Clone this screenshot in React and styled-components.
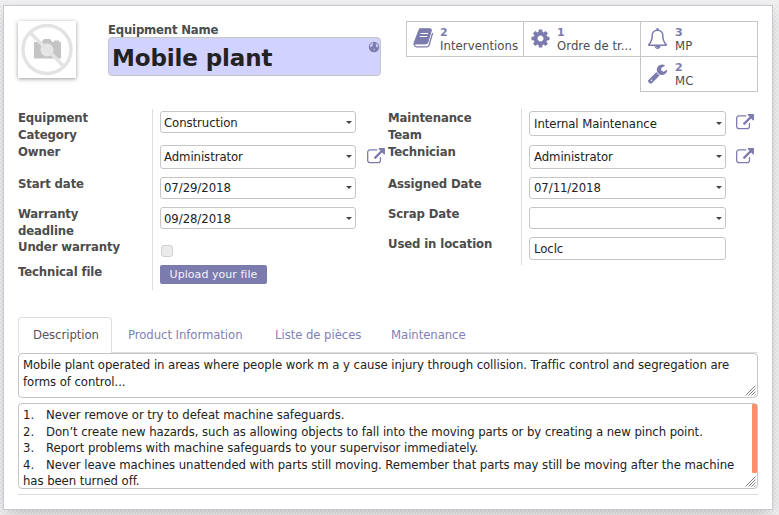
import React from 'react';
import styled, { createGlobalStyle } from 'styled-components';

const purple = '#7c7bad';
const edge = '#c6c6c6';

const GlobalStyle = createGlobalStyle`
  * { box-sizing: border-box; }
  html, body { margin: 0; padding: 0; }
  body {
    background-color: #ececec;
    background-image: repeating-conic-gradient(#e6e6e6 0 25%, #f1f1f1 0 50%);
    background-size: 4px 4px;
    font-family: "DejaVu Sans Condensed", "DejaVu Sans", sans-serif;
    font-size: 13px;
    letter-spacing: -0.065px;
    line-height: 17px;
    color: #222;
    overflow: hidden;
  }
`;

const Page = styled.div`
  height: 515px;
  padding: 5px 6px 5px 3px;
  background: linear-gradient(#f0f0f0, #ededed) top / 100% 5px no-repeat;
`;

const Sheet = styled.main`
  height: 505px;
  padding: 15px 14px 0;
  background: #fff;
  border: 1px solid #c8c8d3;
  box-shadow: 0 5px 14px -5px rgba(0, 0, 0, 0.28);
`;

const Header = styled.header`
  display: flex;
  align-items: flex-start;
  height: 88px;
`;

const Photo = styled.div`
  width: 58px;
  height: 57px;
  background: #fff;
  box-shadow: 0 1px 4px rgba(0, 0, 0, 0.4);
  svg { display: block; }
`;

const TitleBlock = styled.div`
  width: 273px;
  margin-left: 32px;
`;

const TitleLabel = styled.label`
  display: block;
  height: 16px;
  font-weight: bold;
  letter-spacing: -0.2px;
  color: #4c4c4c;
`;

const TitleInput = styled.div`
  display: flex;
  justify-content: space-between;
  height: 39px;
  padding: 3px 0 0 3px;
  border: 1px solid ${edge};
  border-radius: 4px;
  background: #d2d2ff;
  font: bold 23px/34px "DejaVu Sans", sans-serif;
  letter-spacing: -0.12px;
`;

const StatGrid = styled.div`
  display: grid;
  direction: rtl;
  grid-template-columns: 118px 117px 117px;
  margin-left: 25px;
`;

const StatButton = styled.button`
  display: flex;
  direction: ltr;
  height: 36px;
  margin: 0 ${p => (p.$edge ? 0 : -1)}px -1px 0;
  padding: 4px 0 0 6px;
  gap: ${p => (p.$edge ? 7 : 6)}px;
  border: 1px solid ${edge};
  background: #fff;
  font: inherit;
  letter-spacing: 0.05px;
  text-align: left;
  color: #4c4c4c;
  white-space: nowrap;
  svg { flex: none; margin-top: 2px; }
`;

const StatText = styled.span`
  display: block;
  b { display: block; font: bold 11px/13px "DejaVu Sans", sans-serif; color: ${purple}; }
  span { display: block; line-height: 14px; }
`;

const Groups = styled.section`
  display: flex;
  height: 208px;
`;

const Group = styled.div`
  display: grid;
  grid-template-columns: ${p => p.$label}px 1fr;
  grid-template-rows: ${p => p.$rows};
  align-self: flex-start;
  width: 370px;
`;

const Label = styled.label`
  border-right: 1px solid #ddd;
  font-weight: bold;
  letter-spacing: -0.12px;
  color: #4c4c4c;
  white-space: pre-line;
`;

const Cell = styled.div`
  display: flex;
  align-items: flex-start;
  padding: 2px 0 0 7px;
  > svg { margin: 3px 0 0 ${p => p.$gap}px; }
`;

const Field = styled.div`
  display: flex;
  justify-content: space-between;
  width: ${p => p.$w || 197}px;
  height: ${p => p.$h || 22}px;
  padding: ${p => p.$top || 2}px 3px 0 ${p => (p.$w ? 3 : 4)}px;
  border: 1px solid ${edge};
  border-radius: 3px;
  background: #fff;
`;

const Caret = styled.i`
  align-self: flex-start;
  margin-top: 7px;
  border: 3px solid transparent;
  border-top-color: #444;
  border-bottom: 0;
`;

const Checkbox = styled.span`
  width: 12px;
  height: 12px;
  margin: 5px 0 0 1px;
  border: 1px solid #d0d0d0;
  border-radius: 3px;
  background: #ebebeb;
`;

const Upload = styled.button`
  width: 107px;
  height: 19px;
  padding: 0;
  border: 0;
  border-radius: 2px;
  background: ${purple};
  color: #f4f4fa;
  font: 11px/18px "DejaVu Sans", sans-serif;
  letter-spacing: 0.05px;
`;

const Tabs = styled.nav`
  display: flex;
  height: 36px;
  border-bottom: 1px solid #ddd;
`;

const Tab = styled.a`
  height: ${p => (p.$active ? 36 : 35)}px;
  padding: 0 15px 0 ${p => (p.$active ? 14 : 15)}px;
  width: ${p => p.$w}px;
  white-space: nowrap;
  line-height: 34px;
  border: 1px solid ${p => (p.$active ? '#ddd' : 'transparent')};
  border-bottom: 0;
  border-radius: 4px 4px 0 0;
  background: #fff;
  color: ${p => (p.$active ? '#555' : '#8280b8')};
`;

const TextBox = styled.div`
  display: flex;
  justify-content: space-between;
  width: 740px;
  height: ${p => p.$h}px;
  margin-bottom: 5px;
  padding-left: 4px;
  border: 1px solid ${edge};
  border-radius: 4px;
`;

const Copy = styled.div`
  padding-top: ${p => p.$top}px;
  line-height: ${p => p.$lh}px;
  white-space: pre;
`;

const Item = styled.span`
  display: grid;
  grid-template-columns: 23px 1fr;
`;

const Side = styled.div`
  display: flex;
  flex-direction: column;
  align-items: flex-end;
  svg { margin: auto 1px 1px 0; }
`;

const Thumb = styled.div`
  width: 5px;
  height: 69px;
  border-radius: 1px;
  background: #f4926b;
`;

const Rule = styled.hr`
  margin: 0;
  border: 0;
  border-top: 1px solid #ddd;
`;

const paths = {
  cog: 'M1152 896q0-106-75-181t-181-75-181 75-75 181 75 181 181 75 181-75 75-181zm512-109v222q0 12-8 23t-20 13l-185 28q-19 54-39 91 35 50 107 138 10 12 10 25t-9 23q-27 37-99 108t-94 71q-12 0-26-9l-138-108q-44 23-91 38-16 136-29 186-7 28-36 28H785q-14 0-24.500-8.500T749 1634l-28-184q-49-16-90-37l-141 107q-10 9-25 9-14 0-25-11-126-114-165-168-7-10-7-23 0-12 8-23 15-21 51-66.500t54-70.500q-27-50-41-99l-183-27q-13-2-21-12.500t-8-23.500V783q0-12 8-23t19-13l186-28q14-46 39-92-40-57-107-138-10-12-10-24 0-10 9-23 26-36 98.500-107.500T465 263q13 0 26 10l138 107q44-23 91-38 16-136 29-186 7-28 36-28h222q14 0 24.500 8.500T1043 158l28 184q49 16 90 37l142-107q9-9 24-9 13 0 25 10 129 119 165 170 7 8 7 22 0 12-8 23-15 21-51 66.500t-54 70.500q26 50 41 98l183 28q13 2 21 12.500t8 23.500z',
  bell: 'M912 1696q0-16-16-16-59 0-101.500-42.500T752 1536q0-16-16-16t-16 16q0 73 51.500 124.500T896 1712q16 0 16-16zM246 1408h1300q-266-300-266-832 0-51-24-105t-69-103-121.500-80.500T896 256t-169.500 31.500T605 368t-69 103-24 105q0 532-266 832zm1482 0q0 52-38 90t-90 38h-448q0 106-75 181t-181 75-181-75-75-181H192q-52 0-90-38t-38-90q50-42 91-88t85-119.500 74.500-158.500 50-206T384 576q0-152 117-282.500T808 135q-8-19-8-39 0-40 28-68t68-28 68 28 28 68q0 20-8 39 190 28 307 158.500T1408 576q0 139 19.500 260t50 206 74.500 158.500 85 119.500 91 88z',
  wrench: 'M448 1472q0-26-19-45t-45-19-45 19-19 45 19 45 45 19 45-19 19-45zm644-420l-682 682q-37 37-90 37-52 0-91-37L123 1626q-38-36-38-90 0-53 38-91l681-681q39 98 114.500 173.500T1092 1052zm634-435q0 39-23 106-47 134-164.500 217.500T1280 1024q-185 0-316.500-131.500T832 576t131.500-316.500T1280 128q58 0 121.500 16.500T1509 191q16 11 16 28t-16 28l-293 169v224l193 107q5-3 79-48.500t135.500-81T1694 582q15 0 23.500 10t8.500 25z',
};

const StatIcon = ({ name }) => (
  name === 'book' ? (
    <svg width="21" height="21" viewBox="0 0 21 21" fill="none">
      <path d="M6.500 1H16.600Q18.500 1 18 2.800L14.700 14Q14.200 15.700 12.500 15.700H3Q1.200 15.700 1.400 17 1.700 18.900 3.500 18.900H14Q15.500 18.900 16 17.500L19.600 5" stroke={purple} strokeWidth="1.300" />
      <path d="M6 .8H17Q19 .8 18.400 2.800L15.100 14Q14.500 16.200 12.500 16.200H2.500Q.9 16.200.6 17L.5 15Z" fill={purple} />
      <path d="M7.500 5.500H15M6.700 8.500H14.200" stroke="#fff" strokeWidth="1.200" />
    </svg>
  ) : (
    <svg width="21" height="21" viewBox="0 0 1792 1792" fill={purple}><path d={paths[name]} /></svg>
  )
);

const ExternalLink = () => (
  <svg width="18" height="16" viewBox="0 0 1792 1600" fill={purple}>
    <path d="M1408 928v320q0 119-84.500 203.500T1120 1536H288q-119 0-203.500-84.500T0 1248V416q0-119 84.500-203.500T288 128h704q14 0 23 9t9 23v64q0 14-9 23t-23 9H288q-66 0-113 47t-47 113v832q0 66 47 113t113 47h832q66 0 113-47t47-113V928q0-14 9-23t23-9h64q14 0 23 9t9 23zm384-864v512q0 26-19 45t-45 19-45-19l-176-176-652 652q-10 10-23 10t-23-10L695 983q-10-10-10-23t10-23l652-652-176-176q-19-19-19-45t19-45 45-19h512q26 0 45 19t19 45z" />
  </svg>
);

const Globe = () => (
  <svg width="12" height="12" viewBox="0 0 12 12">
    <circle cx="6" cy="6" r="5.200" fill={purple} />
    <path d="M2 4 4 1.700l1.500.3L4.500 3.500l.5 1-1.300 1-.7 1L2 5.500zM7.800 2.200l1.500.8 1 2-.8 1.500L8 6zM5.500 7.500l1.500.5-1.200 1.800z" fill="#c9c9f5" />
  </svg>
);

const NoPhoto = () => (
  <svg width="58" height="57" viewBox="0 0 58 57">
    <path d="M16 21h7.500l2.500-3h6l2.500 3h1.500v-1.500h5V21h2v16.500H16z" fill="#c4c4c4" />
    <circle cx="29" cy="29" r="6.500" fill="#e6e6e6" />
    <circle cx="29" cy="28.500" r="24" fill="none" stroke="#e3e3e3" strokeWidth="3.400" />
    <path d="m12.500 12 33.500 33.500" stroke="#e3e3e3" strokeWidth="3.600" />
  </svg>
);

const Grip = () => (
  <svg width="11" height="11" viewBox="0 0 11 11" stroke="#858585" strokeWidth="1">
    <path d="M.5 10.500l10-10M3.500 10.500l7-7M6.500 10.500l4-4M9.500 10.500l1-1" />
  </svg>
);

const Stat = ({ icon, count, children, edge: isEdge }) => (
  <StatButton $edge={isEdge}>
    <StatIcon name={icon} />
    <StatText><b>{count}</b><span>{children}</span></StatText>
  </StatButton>
);

const Select = ({ children, ...size }) => (
  <Field {...size}><span>{children}</span><Caret /></Field>
);

const steps = [
  'Never remove or try to defeat machine safeguards.',
  'Don’t create new hazards, such as allowing objects to fall into the moving parts or by creating a new pinch point.',
  'Report problems with machine safeguards to your supervisor immediately.',
  'Never leave machines unattended with parts still moving. Remember that parts may still be moving after the machine',
];

export default function App() {
  return (
    <Page>
      <GlobalStyle />
      <Sheet>
        <Header>
          <Photo><NoPhoto /></Photo>
          <TitleBlock>
            <TitleLabel>Equipment Name</TitleLabel>
            <TitleInput>Mobile plant<Globe /></TitleInput>
          </TitleBlock>
          <StatGrid>
            <Stat icon="bell" count="3" edge>MP</Stat>
            <Stat icon="cog" count="1">Ordre de tr...</Stat>
            <Stat icon="book" count="2">Interventions</Stat>
            <Stat icon="wrench" count="2" edge>MC</Stat>
          </StatGrid>
        </Header>
        <Groups>
          <Group $label={135} $rows="34px 32px 30px 33px 25px 27px">
            <Label>{'Equipment\nCategory'}</Label>
            <Cell><Select $w={196}>Construction</Select></Cell>
            <Label>Owner</Label>
            <Cell $gap={11}><Select $w={196} $h={24}>Administrator</Select><ExternalLink /></Cell>
            <Label>Start date</Label>
            <Cell><Select $w={196} $top={1}>07/29/2018</Select></Cell>
            <Label>{'Warranty\ndeadline'}</Label>
            <Cell><Select $w={196}>09/28/2018</Select></Cell>
            <Label>Under warranty</Label>
            <Cell><Checkbox /></Cell>
            <Label>Technical file</Label>
            <Cell><Upload>Upload your file</Upload></Cell>
          </Group>
          <Group $label={134} $rows="34px 32px 30px 30px 30px">
            <Label>{'Maintenance\nTeam'}</Label>
            <Cell $gap={10}><Select $h={25} $top={3}>Internal Maintenance</Select><ExternalLink /></Cell>
            <Label>Technician</Label>
            <Cell $gap={10}><Select $h={24}>Administrator</Select><ExternalLink /></Cell>
            <Label>Assigned Date</Label>
            <Cell><Select $top={1}>07/11/2018</Select></Cell>
            <Label>Scrap Date</Label>
            <Cell><Select /></Cell>
            <Label>Used in location</Label>
            <Cell><Field $h={23}>Loclc</Field></Cell>
          </Group>
        </Groups>
        <Tabs>
          <Tab $active $w={94}>Description</Tab>
          <Tab $w={147}>Product Information</Tab>
          <Tab $w={116}>Liste de pièces</Tab>
          <Tab $w={105}>Maintenance</Tab>
        </Tabs>
        <TextBox $h={45}>
          <Copy $top={2} $lh={17}>{'Mobile plant operated in areas where people work m a y cause injury through collision. Traffic control and segregation are\nforms of control...'}</Copy>
          <Side><Grip /></Side>
        </TextBox>
        <TextBox $h={86}>
          <Copy $top={3} $lh={16.6}>
            {steps.map((s, i) => <Item key={s}><span>{i + 1}.</span><span>{s}</span></Item>)}
            has been turned off.
          </Copy>
          <Side><Thumb /><Grip /></Side>
        </TextBox>
        <Rule />
      </Sheet>
    </Page>
  );
}
